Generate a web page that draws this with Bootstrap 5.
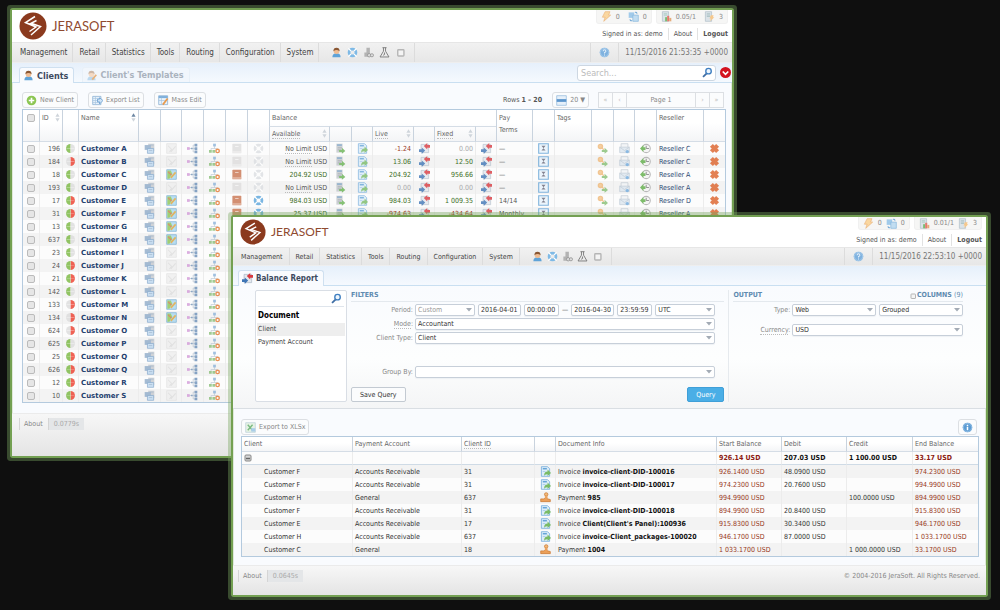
<!DOCTYPE html>
<html lang="en">
<head>
<meta charset="utf-8">
<meta name="viewport" content="width=device-width, initial-scale=1">
<title>JeraSoft Billing</title>
<link href="https://cdn.jsdelivr.net/npm/bootstrap@5.3.0/dist/css/bootstrap.min.css" rel="stylesheet">
<style>
body{background:#0f0f0f;font-family:"DejaVu Sans Condensed","DejaVu Sans",sans-serif;font-stretch:condensed;font-size:7px;line-height:12px;color:#555;min-height:100vh;position:relative;overflow-x:hidden;white-space:nowrap}
a{color:inherit;text-decoration:none}
svg{display:block;flex:none}
.ic{width:11px;height:11px}
.win{position:absolute;background:#f9fbfe;box-shadow:0 0 0 1px #dfe9d8 inset,0 0 0 2px #73a052,0 0 0 5px rgba(120,165,95,.4);border-radius:1px}
.win-clients{left:1.2%;width:72%;top:10px}
.win-report{left:23.3%;width:75.3%;top:217px}
.brandbar{height:32px;background:#fff}
.win-report .brandbar{height:30px}
.brandlink{gap:5px;padding-left:7px}
.brandname{font-family:Lato,sans-serif;font-size:13px;line-height:16px;color:#8f4a30}
.win-report .brandname{font-size:12px}
.stat{height:14px;background:#f6f6f5;border:1px solid #f0f0f0;border-top:0;border-radius:0 0 3px 3px;color:#888}
.win-report .stat{height:13px}
.stat .ic{opacity:.8}
.who>*+*{border-left:1px solid #e2e2e2;padding-left:5px;margin-left:5px}
.menubar{height:21px;background:linear-gradient(#f1f1f1,#e7e7e7);border-top:1px solid #e6e6e6;border-bottom:1px solid #eee;font-size:8px;color:#444}
.win-report .menubar{height:19px;font-size:7px}
.menubar .cell{border-right:1px solid #dcdcdc;padding:0 5px 0 6px;display:flex;align-items:center;height:100%}
.win-report .menubar .cell{padding-right:6px}
.menubar .cell:first-child{padding-left:8px}
.menubar .cell.qk{gap:5px;padding:0 8px 0 12px}
.win-report .menubar .cell.qk{gap:4px;padding-right:8px}
.menubar .clock{border-left:1px solid #dcdcdc;padding:0 4px 0 6px;color:#777;display:flex;align-items:center;height:100%;font-size:8px}
.tabbar{height:20px;background:linear-gradient(#e6f0fb,#f5f9fe);border-bottom:1px solid #c9dff1;padding:0 1px 0 7px}
.win-report .tabbar{padding-left:5px}
.tab{height:16px;margin-bottom:-1px;border:1px solid #cfe0f0;border-bottom:0;border-radius:3px 3px 0 0;background:#f9fbfe;font-weight:700;font-size:9px;color:#3d4a5e;padding:0 5px 0 3px;gap:3px}
.tab.off{background:#f1f6fc;border-color:#e8f0f8;color:#aab3be;margin-bottom:0;height:15px}
.win-report .tab{font-size:8px}
.searchbox{width:139px;height:16px;border:1px solid #cdd7e2;border-radius:3px;background:#fff;padding:0 2px 0 3px}
.searchbox input{border:0;outline:0;background:none;font-size:9px;line-height:12px;padding:0;min-width:0;flex:1}
.searchbox input::placeholder{color:#bbb}
.btn.tool{font-size:7px;line-height:12px;height:16px;padding:0 3px;border:1px solid #dcdfe3;border-radius:3px;background:#fbfcfd;color:#888;display:flex;align-items:center;gap:3px}
.pager .btn.tool{border-radius:0;margin-left:-1px;justify-content:center;color:#bbb;min-width:15px}
.pager .btn.tool.pg{width:70px;color:#888}
.main1{padding:9px 8px 10px 10px}
.bar1{gap:10px;margin-bottom:1px}
.rep{padding:10px 9px 8px 8px}
.bar2{margin-bottom:1px}
.table.dt{table-layout:fixed;width:100%;margin:0;border-collapse:separate;border-spacing:0;border:1px solid #b4cade;color:#555;background:#fff}
.table.dt>:not(caption)>*>*{padding:0 2px;border:0;border-left:1px solid #ececec;box-shadow:none;height:13px;line-height:12px;font-weight:400;overflow:hidden;background:none;color:inherit;vertical-align:middle}
.table.dt>:not(caption)>*>:first-child{border-left:0}
.table.dt>thead>tr>th{border-left:1px solid #c9d3de;height:16px;vertical-align:top;color:#666;padding-top:2px}
.table.dt>thead>tr.sub>th:first-child{border-left:1px solid #c9d3de}
.table.dt>thead>tr.sub>th{border-top:1px solid #d5dde6;padding-top:1px}
.table.dt>thead{background:linear-gradient(#fff 40%,#f3f4f6)}
.table.dt>thead>tr:last-child>th,.table.dt>thead>tr>th[rowspan]{border-bottom:1px solid #d5dde6}
.table.dt>tbody>tr:nth-child(odd){background:#fcfcfc}
.table.dt>tbody>tr:nth-child(even){background:#f3f3f3}
.dt .ic{margin:0 auto}
#clients .ic{opacity:.8}
.dt .chk{appearance:none;width:8px;height:8px;margin:0 auto;display:block;border:1px solid #bbb;border-radius:2px;background:#e6e6e6}
.table.dt>*>tr>.num{text-align:right}
.table.dt>:not(caption)>tr>.pic{padding:0}
.table.dt>thead>tr>th.pic{padding-top:4px}
.table.dt>tbody>tr>.cust{color:#1f3f6e;font-weight:700;font-family:"DejaVu Sans",sans-serif;font-stretch:normal}
.table.dt>tbody>tr>.pos{color:#3c6e1f}
.table.dt>tbody>tr>.neg{color:#98381c}
.table.dt>tbody>tr>.nil{color:#aaa}
.table.dt>tbody>tr>.lnk{color:#2f4a73}
.dots{border-bottom:1px dotted #bbb}
.sorter{float:right;margin-top:1px}
.foot{background:linear-gradient(#f7f7f7,#e4e4e4);border-top:1px solid #ebebeb;color:#888;padding:4px 6px 0 7px}
.win-clients .foot{height:43px}
.win-report .foot{height:30px;padding-left:5px}
.foot .abt{border-left:1px solid #d5d5d5;padding-left:4px}
.foot .ms{background:#e4e6e8;color:#aaa;border-left:1px solid #d5d5d5;padding:0 5px;margin-left:5px}
.panel-q{display:grid;grid-template-columns:92px 379fr 230fr;column-gap:4px;padding:4px 23px 6px 22px;border-bottom:1px solid #d9dee3;background:linear-gradient(#f9fbfe,#fdfefe 60%,#f4f5f6)}
.picker{border:1px solid #d9dee5;border-radius:2px;background:#fff;padding:0 1px;color:#444}
.picker .find{height:16px;border-bottom:1px solid #dfe5ec;margin:0 1px 3px;padding-right:2px}
.picker .find input{border:0;outline:0;min-width:0;flex:1;background:none;padding:0;font-size:7px;line-height:10px}
.picker a,.picker b{display:block;height:13px;padding-left:1px}
.picker b{font-size:8px;color:#000}
.picker .cur{background:#eee}
.sect{height:12px;line-height:11px;font-weight:700;color:#5f8bb0;border-bottom:1px solid #e4e9ee;margin-bottom:2px}
.colq{border-right:1px solid #e6eaee;padding-right:4px}
.frow{display:flex;align-items:center;gap:3px;height:12px;margin:0 9px 2px 0}
.frow.grp{margin-top:22px}
.frow.cur1{margin-top:8px}
.frow .lb{width:62px;text-align:right;color:#888;flex:none;margin-right:-1px}
.outq .frow{margin-right:0}
.outq .lb{width:57px}
.acts{margin-top:9px}
.form-select.fs,.form-control.fc{font-size:7px;line-height:10px;height:12px;min-height:0;border:1px solid #c7cfd9;border-radius:2px;padding:0 2px;color:#333;box-shadow:0 1px 1px #eef1f4;min-width:0;background-color:#fff}
.form-select.fs{flex:1;padding-right:9px;background-image:url("data:image/svg+xml,%3Csvg xmlns='http://www.w3.org/2000/svg' viewBox='0 0 6 4'%3E%3Cpath d='M0 0h6L3 3.6z' fill='%23a3abb5'/%3E%3C/svg%3E");background-size:6px 4px;background-position:right 2px center}
.form-select.dim{flex:0 0 60px;color:#999}
.form-control.dt1{flex:0 0 43px}
.form-control.tm1{flex:0 0 35px}
.btn.save,.btn.go{height:15px;line-height:12px;font-size:7px;padding:0 8px;border:1px solid #c3cad2;border-radius:2px;background:#fbfcfd;color:#333}
.btn.go{border-color:#3f9fd8;background:#4aaee6;color:#fff}
.rep .table.dt>tbody>tr.sum>*{border-bottom:1px solid #cfdbe6;font-weight:700;color:#111}
.rep .table.dt>tbody>tr>td{color:#333}
.rep .table.dt>tbody>tr>.neg{color:#98381c}
.rep .table.dt>tbody>tr.sum>.tot{color:#8c1a10}
.rep .table.dt>thead>tr>th{height:15px;padding-top:1px}
.rep .table.dt>tbody>tr>.ind{padding-left:22px}
.rep td b{color:#111}
</style>
</head>
<body>
<svg width="0" height="0" class="position-absolute" aria-hidden="true">
<symbol id="logo" viewBox="0 0 28 28"><circle cx="14" cy="14" r="13.5" fill="#8b3a1e"/><path d="M16 4.500 6.500 10.500 17 15l-6.500 4.500M17.500 8.500 12 11.300l9.500 3.200L12 23" fill="none" stroke="#fff" stroke-width="1.500"/></symbol>
<symbol id="user" viewBox="0 0 16 16"><path d="M2 15q0-6 6-6t6 6z" fill="#5fa3d8"/><circle cx="8" cy="6" r="4" fill="#f0bd93"/><path d="M3.500 6q0-5 4.500-5t4.500 5Q8 3 3.500 6z" fill="#8a5733"/></symbol>
<symbol id="usertpl" viewBox="0 0 16 16"><path d="M2 15q0-6 6-6t6 6z" fill="#bcd8ee"/><circle cx="8" cy="6" r="4" fill="#f5dac4"/><path d="M3.500 6q0-5 4.500-5t4.500 5Q8 3 3.500 6z" fill="#cdb7a6"/><path d="m9 14 6-7" stroke="#e8b27c" stroke-width="2.500"/></symbol>
<symbol id="buoy" viewBox="0 0 16 16"><circle cx="8" cy="8" r="5" fill="none" stroke="currentColor" stroke-width="4"/><path d="m2 2 4 4m8-4-4 4M2 14l4-4m8 4-4-4" stroke="#fff" stroke-width="2"/></symbol>
<symbol id="coins" viewBox="0 0 16 16"><path d="M5 1h5v7H5zM2 8h8v6H2z" fill="#b3b3b3"/><circle cx="9" cy="12" r="2.500" fill="#ddd" stroke="#888"/><circle cx="13" cy="12" r="2.300" fill="#ddd" stroke="#888"/></symbol>
<symbol id="flask" viewBox="0 0 16 16"><path d="M5 1h6M6.500 1v5L1.500 14.500h13L9.500 6V1M8 8v3l-2 1" fill="none" stroke="#777" stroke-width="1.300"/></symbol>
<symbol id="sq" viewBox="0 0 16 16"><rect x="4" y="4" width="9" height="9" rx="1" fill="#f4f4f4" stroke="#b5b5b5" stroke-width="2"/></symbol>
<symbol id="help" viewBox="0 0 16 16"><circle cx="8" cy="8" r="7" fill="#7fb2df"/><circle cx="8" cy="8" r="6" fill="none" stroke="#b5d4ee"/><path d="M6 6q0-2 2-2t2 2q0 1-2 2v1.500M8 11v1.500" fill="none" stroke="#e4f0fa" stroke-width="1.500"/></symbol>
<symbol id="info" viewBox="0 0 16 16"><circle cx="8" cy="8" r="7" fill="#5b9bd3"/><circle cx="8" cy="8" r="6" fill="none" stroke="#a6cbea"/><path d="M8 7v5M8 4v1.700" stroke="#fff" stroke-width="2.200"/></symbol>
<symbol id="bolt" viewBox="0 0 16 16"><path d="M6 1h7l-2 5h3L4 15l2-6H2z" fill="#fbd08b" stroke="#e9a45c"/></symbol>
<symbol id="sync" viewBox="0 0 16 16"><path d="M1 2h8v8H1z" fill="#8cc0e8"/><path d="M7 6h8v9H7z" fill="#b5d7f1" stroke="#6ba7d8"/><path d="M3 12q0 3 3 2M13 4q0-3-3-2" fill="none" stroke="#4a90cc" stroke-width="1.500"/></symbol>
<symbol id="srvbars" viewBox="0 0 16 16"><path d="M2 1h9v14H2z" fill="#d5dfe6" stroke="#9fb0bd"/><path d="M4 4h5M4 6h5" stroke="#8ba"/><path d="M6 9h3v6H6z" fill="#5cae54"/><path d="M9 7h3v8H9z" fill="#e35b4c"/><path d="M12 10h3v5h-3z" fill="#e0995a"/></symbol>
<symbol id="srvbolt" viewBox="0 0 16 16"><path d="M2 1h9v14H2z" fill="#d5dfe6" stroke="#9fb0bd"/><path d="M4 4h5M4 6h5M4 8h5" stroke="#8aa"/><path d="M10 6h4l-1 3h2l-6 6 1-4H8z" fill="#f6bd72"/></symbol>
<symbol id="add" viewBox="0 0 16 16"><circle cx="8" cy="8" r="7" fill="#8cc653"/><path d="M8 4v8M4 8h8" stroke="#fff" stroke-width="2.400"/></symbol>
<symbol id="export" viewBox="0 0 16 16"><path d="M1 2h12v12H1z" fill="#eaf3fb" stroke="#7fa9cf"/><path d="M1 5h12M5 2v12M1 8h12M1 11h12" stroke="#a6c5e1"/><path d="M8 6h3V4l5 4-5 5v-3H8z" fill="#cfe4f6" stroke="#5b95cc"/></symbol>
<symbol id="mass" viewBox="0 0 16 16"><path d="M1 1h13v13H1z" fill="#eaf3fb" stroke="#7fa9cf"/><path d="M1 3h13" stroke="#7fb0dc" stroke-width="3"/><path d="M5 4v10M1 8h13" stroke="#a6c5e1"/><path d="m7 14 7-9" stroke="#e89a4c" stroke-width="2.500"/></symbol>
<symbol id="rows" viewBox="0 0 16 16"><path d="M1 1h14v14H1z" fill="#e6f0fa" stroke="#8fb6da"/><path d="M1 8h14" stroke="#5b95cc" stroke-width="4"/></symbol>
<symbol id="pieG" viewBox="0 0 16 16"><circle cx="8" cy="8" r="6.500" fill="#dcdcdc"/><path d="M8 1.500a6.500 6.500 0 0 0 0 13z" fill="#78b83e"/><path d="M2 8h12M8 2v12" stroke="#fff" stroke-opacity=".45"/></symbol>
<symbol id="pieR" viewBox="0 0 16 16"><circle cx="8" cy="8" r="6.500" fill="#dcdcdc"/><path d="M8 1.500a6.500 6.500 0 0 1 0 13z" fill="#ee3c2c"/><path d="M2 8h12M8 2v12" stroke="#fff" stroke-opacity=".45"/></symbol>
<symbol id="pieB" viewBox="0 0 16 16"><path d="M8 1.500a6.500 6.500 0 0 1 0 13z" fill="#ee3c2c"/><path d="M8 1.500a6.500 6.500 0 0 0 0 13z" fill="#78b83e"/><path d="M2 8h12M8 2v12" stroke="#fff" stroke-opacity=".3"/></symbol>
<symbol id="cards" viewBox="0 0 16 16"><path d="M6 1h9v11H6z" fill="#c4c9cf"/><path d="M1 3h9v7H1z" fill="#8fabc9"/><path d="M5 8h9v7H5z" fill="#bfdaf2" stroke="#6d97c2"/><path d="M7 11h5M8 3h6" stroke="#8fa8c4"/></symbol>
<symbol id="map" viewBox="0 0 16 16"><path d="M1 1h14v14H1z" fill="#a9d8f1" stroke="#5d9cc8"/><path d="M2 2h5l2 5-4 7H2z" fill="#8cc653"/><path d="m3 4 5 5" stroke="#e35b4c" stroke-width="1.500"/><path d="m7 13 7-8" stroke="#dba43c" stroke-width="2.500"/></symbol>
<symbol id="mapoff" viewBox="0 0 16 16"><path d="M1 1h14v14H1z" fill="#efefef" stroke="#dedede"/><path d="m3 4 5 5-3 4M7 13l7-8" fill="none" stroke="#dcdcdc" stroke-width="1.500"/></symbol>
<symbol id="treeL" viewBox="0 0 16 16"><path d="M3 8h9M12 3H9v10h3" fill="none" stroke="#a9b7c6"/><path d="M0 6h4v4H0z" fill="#d39ad8"/><path d="M11 1h4v4h-4zM11 6h4v4h-4zM11 11h4v4h-4zM6 7h2v2H6z" fill="#6a8fb8"/></symbol>
<symbol id="treeT" viewBox="0 0 16 16"><path d="M8 4v4M3 11V8h9v3" fill="none" stroke="#b3c0ce"/><path d="M6 1h4v4H6z" fill="#8ab2d8"/><path d="M0 10h4v4H0zM5 10h4v4H5z" fill="#8abf78"/><circle cx="12.500" cy="11.500" r="2.500" fill="#fff" stroke="#e5782f" stroke-width="2"/></symbol>
<symbol id="book" viewBox="0 0 16 16"><rect x="2" y="1" width="13" height="14" rx="1" fill="#c97550"/><path d="M6 5h5M2 13h13" stroke="#e9c5b3" stroke-width="1.600"/></symbol>
<symbol id="bookoff" viewBox="0 0 16 16"><rect x="2" y="1" width="13" height="14" rx="1" fill="#dedddd"/><path d="M6 5h5M2 13h13" stroke="#f3f3f3" stroke-width="1.600"/></symbol>
<symbol id="calc" viewBox="0 0 16 16"><path d="M2 1h9v13H2z" fill="#c2c7cc"/><path d="M3 3h7" stroke="#6d9ac4" stroke-width="2"/><path d="M4 7h6M4 10h5" stroke="#8d949b"/><path d="M6 10h4V7l5 4.500-5 4V13H6z" fill="#69b354"/></symbol>
<symbol id="inv" viewBox="0 0 16 16"><path d="M2 1h9l3 3v11H2z" fill="#dcedfa" stroke="#5fa0d6"/><path d="M4 4h6" stroke="#5fa0d6" stroke-width="2"/><path d="M4 8h4" stroke="#9cc3e4"/><path d="M6 14q0-6 5-6V5l5 5-5 4.500V12q-3 0-5 2z" fill="#79bb66"/></symbol>
<symbol id="swap" viewBox="0 0 16 16"><path d="M3 2h11v12H3z" fill="#e3e8ee" stroke="#aab6c4"/><path d="M7 4.500 12 0v3h4v4h-4v2.500z" fill="#d8393f"/><path d="M0 9h4V6.500L9 11l-5 5v-3H0z" fill="#3f75b5"/></symbol>
<symbol id="hour" viewBox="0 0 16 16"><path d="M1 1h14v14H1z" fill="#e9f4fd" stroke="#64a3d6" stroke-width="1.600"/><path d="M5 4h6L8 7.500 11 11H5l3-3.500z" fill="#667"/></symbol>
<symbol id="key" viewBox="0 0 16 16"><circle cx="5" cy="5" r="3" fill="#f3c48e" stroke="#efb877" stroke-width="2"/><path d="m7 7 3 3" stroke="#efb877" stroke-width="2"/><path d="M7 10h4V7l5 4.500-5 4V13H7z" fill="#86bf74"/></symbol>
<symbol id="mail" viewBox="0 0 16 16"><path d="M3 1h10v8H3z" fill="#f2f4f6" stroke="#b5bfc9"/><path d="M1 6h14v8H1z" fill="#dce6ef" stroke="#b5c2cf"/><path d="m1 6 7 5 7-5" fill="none" stroke="#b5c2cf"/><circle cx="12" cy="12.500" r="2.500" fill="#6fa9dc"/></symbol>
<symbol id="hist" viewBox="0 0 16 16"><circle cx="9" cy="8" r="6" fill="#f4f4f4" stroke="#aaa" stroke-width="1.500"/><path d="M9 4v4h4" fill="none" stroke="#777" stroke-width="1.400"/><path d="m0 8 5-5v3h3v4H5v3z" fill="#5fae48"/></symbol>
<symbol id="del" viewBox="0 0 16 16"><path d="m3.500 3.500 9 9m0-9-9 9" stroke="#dd6229" stroke-width="6"/></symbol>
<symbol id="hand" viewBox="0 0 16 16"><path d="M1 10h4l3-1 7 2v3H1z" fill="#eba05a" stroke="#c9742d"/><circle cx="9" cy="3.500" r="2.500" fill="#f2b877" stroke="#c9742d"/><path d="M7 6h4v4H7z" fill="#eba05a"/></symbol>
<symbol id="xls" viewBox="0 0 16 16"><path d="M1 1h14v14H1z" fill="#e6f2e4" stroke="#b9cfd8"/><path d="m4 4 7 8m0-8-7 8" stroke="#79b980" stroke-width="2"/><path d="M9 9h6v5H9z" fill="#a9cde9"/></symbol>
<symbol id="lens" viewBox="0 0 16 16"><circle cx="9.500" cy="6" r="4" fill="#eef6fd" stroke="#3f7fc1" stroke-width="2"/><path d="m6.500 9.500-5 5" stroke="#3f6ea5" stroke-width="2.600"/></symbol>
<symbol id="drop" viewBox="0 0 16 16"><circle cx="8" cy="8" r="8" fill="#d3121f"/><path d="m4 6.500 4 4 4-4" fill="none" stroke="#fff" stroke-width="2.400"/></symbol>
<symbol id="sort" viewBox="0 0 6 10"><path d="M3 0 5.500 4h-5zM3 10 .5 6h5z" fill="#cfd5db"/></symbol>
<symbol id="sortup" viewBox="0 0 6 10"><path d="M3 0 5.500 4h-5z" fill="#6d87a3"/><path d="M3 10 .5 6h5z" fill="#cfd5db"/></symbol>
<symbol id="fold" viewBox="0 0 16 16"><rect x="2" y="2" width="12" height="12" rx="2" fill="#d6d6d6" stroke="#888" stroke-width="2"/><path d="M4 9h8" stroke="#666" stroke-width="3"/></symbol>
</svg>

<section class="win win-clients" aria-label="Clients">
  <header class="brandbar d-flex justify-content-between">
    <a href="#" class="brandlink d-flex align-items-center"><svg width="28" height="28"><use href="#logo"/></svg><span class="brandname">JERASOFT</span></a>
    <div class="d-flex flex-column align-items-end pe-1">
      <div class="d-flex gap-1">
        <div class="stat d-flex align-items-center gap-1 px-1"><svg class="ic"><use href="#bolt"/></svg>0<svg class="ic ms-1"><use href="#sync"/></svg>0</div>
        <div class="stat d-flex align-items-center gap-1 px-1"><svg class="ic"><use href="#srvbars"/></svg>0.05/1<svg class="ic ms-1"><use href="#srvbolt"/></svg>3</div>
      </div>
      <div class="who d-flex mt-1"><span>Signed in as: demo</span><a href="#">About</a><a href="#" class="fw-bold">Logout</a></div>
    </div>
  </header>
  <nav class="menubar d-flex justify-content-between">
    <div class="d-flex h-100"><a class="cell" href="#">Management</a><a class="cell" href="#">Retail</a><a class="cell" href="#">Statistics</a><a class="cell" href="#">Tools</a><a class="cell" href="#">Routing</a><a class="cell" href="#">Configuration</a><a class="cell" href="#">System</a>
      <div class="cell qk"><svg class="ic"><use href="#user"/></svg><svg class="ic" style="color:#7fbae6"><use href="#buoy"/></svg><svg class="ic"><use href="#coins"/></svg><svg class="ic"><use href="#flask"/></svg><svg class="ic"><use href="#sq"/></svg></div></div>
    <div class="d-flex h-100"><div class="clock px-1"><svg class="ic mx-1"><use href="#help"/></svg></div><div class="clock">11/15/2016 21:53:35 +0000</div></div>
  </nav>
  <div class="tabbar d-flex align-items-end">
    <a href="#" class="tab d-flex align-items-center"><svg class="ic"><use href="#user"/></svg>Clients</a>
    <a href="#" class="tab off d-flex align-items-center ms-2"><svg class="ic"><use href="#usertpl"/></svg>Client's Templates</a>
    <div class="d-flex align-items-center ms-auto gap-1 align-self-center"><div class="searchbox d-flex align-items-center"><input type="text" placeholder="Search..." aria-label="Search"><svg class="ic"><use href="#lens"/></svg></div><svg class="ic"><use href="#drop"/></svg></div>
  </div>
  <main class="main1">
    <div class="bar1 d-flex align-items-center">
      <button class="btn tool"><svg class="ic"><use href="#add"/></svg>New Client</button>
      <button class="btn tool"><svg class="ic"><use href="#export"/></svg>Export List</button>
      <button class="btn tool"><svg class="ic"><use href="#mass"/></svg>Mass Edit</button>
      <span class="ms-auto">Rows <b>1 – 20</b></span>
      <button class="btn tool"><svg class="ic"><use href="#rows"/></svg>20 ▼</button>
      <div class="pager d-flex"><button class="btn tool">«</button><button class="btn tool">‹</button><button class="btn tool pg">Page 1</button><button class="btn tool">›</button><button class="btn tool">»</button></div>
    </div>
    <table class="table dt" id="clients">
      <colgroup></colgroup>
      <thead>
        <tr><th rowspan="2" class="pic"><input type="checkbox" class="chk" aria-label="Select all"></th><th rowspan="2">ID<svg class="sorter" width="5" height="9"><use href="#sort"/></svg></th><th rowspan="2"></th><th rowspan="2">Name<svg class="sorter" width="5" height="9"><use href="#sortup"/></svg></th><th rowspan="2"></th><th rowspan="2"></th><th rowspan="2"></th><th rowspan="2"></th><th rowspan="2"></th><th rowspan="2"></th><th colspan="7">Balance</th><th rowspan="2">Pay<br>Terms</th><th rowspan="2"></th><th rowspan="2">Tags</th><th rowspan="2"></th><th rowspan="2"></th><th rowspan="2"></th><th rowspan="2">Reseller</th><th rowspan="2"></th></tr>
        <tr class="sub"><th><span class="dots">Available</span><svg class="sorter" width="5" height="9"><use href="#sort"/></svg></th><th></th><th></th><th><span class="dots">Live</span><svg class="sorter" width="5" height="9"><use href="#sort"/></svg></th><th></th><th><span class="dots">Fixed</span><svg class="sorter" width="5" height="9"><use href="#sort"/></svg></th><th></th></tr>
      </thead>
      <tbody></tbody>
    </table>
  </main>
  <footer class="foot d-flex align-items-start"><a href="#" class="abt">About</a><span class="ms">0.0779s</span></footer>
</section>

<section class="win win-report" aria-label="Balance Report">
  <header class="brandbar d-flex justify-content-between">
    <a href="#" class="brandlink d-flex align-items-center"><svg width="26" height="26"><use href="#logo"/></svg><span class="brandname">JERASOFT</span></a>
    <div class="d-flex flex-column align-items-end pe-1">
      <div class="d-flex gap-1">
        <div class="stat d-flex align-items-center gap-1 px-1"><svg class="ic"><use href="#bolt"/></svg>0<svg class="ic"><use href="#sync"/></svg>0</div>
        <div class="stat d-flex align-items-center gap-1 px-1"><svg class="ic"><use href="#srvbars"/></svg>0.01/1<svg class="ic"><use href="#srvbolt"/></svg>3</div>
      </div>
      <div class="who d-flex mt-1"><span>Signed in as: demo</span><a href="#">About</a><a href="#" class="fw-bold">Logout</a></div>
    </div>
  </header>
  <nav class="menubar d-flex justify-content-between">
    <div class="d-flex h-100"><a class="cell" href="#">Management</a><a class="cell" href="#">Retail</a><a class="cell" href="#">Statistics</a><a class="cell" href="#">Tools</a><a class="cell" href="#">Routing</a><a class="cell" href="#">Configuration</a><a class="cell" href="#">System</a>
      <div class="cell qk"><svg class="ic"><use href="#user"/></svg><svg class="ic" style="color:#7fbae6"><use href="#buoy"/></svg><svg class="ic"><use href="#coins"/></svg><svg class="ic"><use href="#flask"/></svg><svg class="ic"><use href="#sq"/></svg></div></div>
    <div class="d-flex h-100"><div class="clock px-1"><svg class="ic mx-1"><use href="#help"/></svg></div><div class="clock">11/15/2016 22:53:10 +0000</div></div>
  </nav>
  <div class="tabbar d-flex align-items-end">
    <a href="#" class="tab d-flex align-items-center"><svg class="ic"><use href="#swap"/></svg>Balance Report</a>
  </div>
  <form class="panel-q" onsubmit="return false">
    <div class="picker">
      <div class="find d-flex align-items-center"><input type="text" aria-label="Find report"><svg class="ic"><use href="#lens"/></svg></div>
      <b>Document</b><a href="#" class="cur">Client</a><a href="#">Payment Account</a>
    </div>
    <div class="colq">
      <div class="sect">FILTERS</div>
      <div class="frow"><label class="lb" for="per">Period:</label><select id="per" class="form-select fs dim"><option>Custom</option></select><input class="form-control fc dt1" aria-label="From date" value="2016-04-01"><input class="form-control fc tm1" aria-label="From time" value="00:00:00">—<input class="form-control fc dt1" aria-label="To date" value="2016-04-30"><input class="form-control fc tm1" aria-label="To time" value="23:59:59"><select class="form-select fs" aria-label="Time zone"><option>UTC</option></select></div>
      <div class="frow"><label class="lb" for="mode"><span class="dots">Mode</span>:</label><select id="mode" class="form-select fs"><option>Accountant</option></select></div>
      <div class="frow"><label class="lb" for="ctype">Client Type:</label><select id="ctype" class="form-select fs"><option>Client</option></select></div>
      <div class="frow grp"><label class="lb" for="grp">Group By:</label><select id="grp" class="form-select fs"><option></option></select></div>
      <div class="d-flex justify-content-between acts"><button class="btn save">Save Query</button><button class="btn go">Query</button></div>
    </div>
    <div class="outq">
      <div class="sect d-flex justify-content-between"><span>OUTPUT</span><a href="#" class="d-flex align-items-center"><svg width="8" height="8"><use href="#sq"/></svg>COLUMNS&nbsp;<span class="fw-normal">(9)</span></a></div>
      <div class="frow"><label class="lb" for="typ">Type:</label><select id="typ" class="form-select fs"><option>Web</option></select><select class="form-select fs" aria-label="Layout"><option>Grouped</option></select></div>
      <div class="frow cur1"><label class="lb" for="cur"><span class="dots">Currency</span>:</label><select id="cur" class="form-select fs"><option>USD</option></select></div>
    </div>
  </form>
  <main class="rep">
    <div class="d-flex justify-content-between bar2"><button class="btn tool"><svg class="ic"><use href="#xls"/></svg>Export to XLSx</button><button class="btn tool" aria-label="Information"><svg class="ic"><use href="#info"/></svg></button></div>
    <table class="table dt" id="report">
      <colgroup></colgroup>
      <thead><tr><th>Client</th><th>Payment Account</th><th><span class="dots">Client ID</span></th><th></th><th>Document Info</th><th>Start Balance</th><th>Debit</th><th>Credit</th><th>End Balance</th></tr></thead>
      <tbody></tbody>
    </table>
  </main>
  <footer class="foot d-flex align-items-start"><a href="#" class="abt">About</a><span class="ms">0.0645s</span><span class="ms-auto">© 2004-2016 JeraSoft. All Rights Reserved.</span></footer>
</section>
<script>
const ic = (n, c) => `<svg class="ic"${c ? ` style="color:${c}"` : ''}><use href="#${n}"/></svg>`;
const cols = (id, w) => document.querySelector(id + ' colgroup').innerHTML = w.map(x => `<col style="width:${x}px">`).join('');
cols('#clients', [16,23,16,60,22,21,22,22,22,22,60,22,21,41,21,41,21,36,22,37,22,21,22,47,22]);
cols('#report', [110,109,73,21,161,65,65,66,66]);

// id, name, status pie, map on, book on, buoy on, available, live, fixed, terms, reseller
const clients = [
 [196,'A','G',0,0,0,'','-1.24','0.00','—','C'],
 [184,'B','R',0,0,0,'','13.06','12.50','—','C'],
 [18,'C','G',1,1,0,'204.92','204.92','956.66','—','A'],
 [193,'D','G',0,0,0,'','0.00','0.00','—','A'],
 [17,'E','B',1,1,1,'984.03','984.03','1 009.35','14/14','D'],
 [31,'F','B',1,1,1,'25.37','-974.63','-434.64','Monthly','A'],
 [13,'G','G',1],[637,'H','G',1],[23,'I','G',0],[24,'J','B',0],[21,'K','B',0],[142,'L','G',0],
 [133,'M','R',1],[134,'N','R',1],[624,'O','R',0],[625,'P','G',0],[25,'Q','B',0],[626,'Q','B',0],[12,'R','B',0],[10,'S','B',0]
];
const tone = v => v[0] === '-' ? 'neg' : v === '0.00' ? 'nil' : 'pos';
document.querySelector('#clients tbody').innerHTML = clients.map(
 ([id, n, p, m, b = 1, o = 1, av, lv = '', fx = '', t = '', r = '']) => `<tr>
 <td class="pic"><input type="checkbox" class="chk" aria-label="Select Customer ${n}"></td><td class="num">${id}</td><td class="pic">${ic('pie' + p)}</td>
 <td class="cust">Customer ${n}</td><td class="pic">${ic('cards')}</td><td class="pic">${ic(m ? 'map' : 'mapoff')}</td><td class="pic">${ic('treeL')}</td><td class="pic">${ic('treeT')}</td>
 <td class="pic">${ic(b ? 'book' : 'bookoff')}</td><td class="pic">${ic('buoy', o ? '#5aa5dc' : '#dcdfe2')}</td>
 <td class="num ${av ? 'pos' : ''}">${av ? av + ' USD' : av === '' ? '<span class="dots">No Limit</span> USD' : ''}</td><td class="pic">${ic('calc')}</td><td class="pic">${ic('inv')}</td>
 <td class="num ${tone(lv)}">${lv}</td><td class="pic">${ic('swap')}</td><td class="num ${tone(fx)}">${fx}</td><td class="pic">${ic('swap')}</td>
 <td>${t}</td><td class="pic">${ic('hour')}</td><td></td><td class="pic">${ic('key')}</td><td class="pic">${ic('mail')}</td><td class="pic">${ic('hist')}</td>
 <td class="lnk">${r && 'Reseller ' + r}</td><td class="pic">${ic('del')}</td></tr>`).join('');

const docs = [
 ['F','Accounts Receivable',31,'Invoice','invoice-client-DID-100016','926.1400','48.0900','','974.2300'],
 ['F','Accounts Receivable',31,'Invoice','invoice-client-DID-100017','974.2300','20.7600','','994.9900'],
 ['H','General',637,'Payment','985','994.9900','','100.0000','894.9900'],
 ['F','Accounts Receivable',31,'Invoice','invoice-client-DID-100018','894.9900','20.8400','','915.8300'],
 ['E','Accounts Receivable',17,'Invoice',"Client(Client's Panel):100936",'915.8300','30.3400','','946.1700'],
 ['H','Accounts Receivable',637,'Invoice','invoice-Client_packages-100020','946.1700','87.0000','','1 033.1700'],
 ['C','General',18,'Payment','1004','1 033.1700','','1 000.0000','33.1700']
];
const usd = v => v ? v + ' USD' : '';
document.querySelector('#report tbody').innerHTML =
 `<tr class="sum"><td><svg width="8" height="8"><use href="#fold"/></svg></td><td></td><td></td><td></td><td></td><td class="tot">926.14 USD</td><td>207.03 USD</td><td>1 100.00 USD</td><td class="tot">33.17 USD</td></tr>` +
 docs.map(([c, a, id, k, n, s, d, cr, e]) => `<tr><td class="ind">Customer ${c}</td><td>${a}</td><td>${id}</td><td class="pic">${ic(k === 'Invoice' ? 'inv' : 'hand')}</td><td>${k} <b>${n}</b></td><td class="neg">${usd(s)}</td><td>${usd(d)}</td><td>${usd(cr)}</td><td class="neg">${usd(e)}</td></tr>`).join('');
</script>
<script src="https://cdn.jsdelivr.net/npm/bootstrap@5.3.0/dist/js/bootstrap.bundle.min.js"></script>
</body>
</html>
